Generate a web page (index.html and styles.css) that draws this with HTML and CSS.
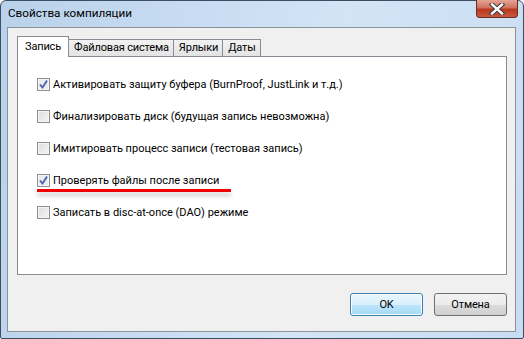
FILE: index.html
```html
<!DOCTYPE html>
<html>
  <head>
    <meta charset="UTF-8" />
    <title>Свойства компиляции</title>
    <link rel="stylesheet" href="styles.css">
  </head>
  <body>
    <div class="window">
      <div class="titlebar">
        <span class="title">Свойства компиляции</span>
        <div class="close">
          <svg width="16" height="12" viewBox="0 0 16 12">
            <path d="M3 1.5 L13 10.5 M13 1.5 L3 10.5" stroke="#3a3a3a" stroke-width="4.4" stroke-linecap="square"/>
            <path d="M3 1.5 L13 10.5 M13 1.5 L3 10.5" stroke="#fff" stroke-width="2.4" stroke-linecap="square"/>
          </svg>
        </div>
      </div>
      <div class="client">
        <div class="tabs">
          <div class="tab active">Запись</div>
          <div class="tab">Файловая система</div>
          <div class="tab">Ярлыки</div>
          <div class="tab">Даты</div>
        </div>
        <div class="panel">
          <label class="row"><span class="box checked"></span>Активировать защиту буфера (BurnProof, JustLink и т.д.)</label>
          <label class="row"><span class="box"></span>Финализировать диск (будущая запись невозможна)</label>
          <label class="row"><span class="box"></span>Имитировать процесс записи (тестовая запись)</label>
          <label class="row"><span class="box checked"></span>Проверять файлы после записи<span class="mark"></span></label>
          <label class="row"><span class="box"></span>Записать в disc-at-once (DAO) режиме</label>
        </div>
        <div class="buttons">
          <div class="btn default">OK</div>
          <div class="btn">Отмена</div>
        </div>
      </div>
    </div>
  </body>
</html>
```
FILE: styles.css
```css
* {
  box-sizing: border-box;
}
body {
  margin: 0;
  background: #fff;
  font-family: Roboto, "Liberation Sans", sans-serif;
  font-size: 11px;
  letter-spacing: -0.15px;
  color: #000;
}
.window {
  width: 524px;
  height: 339px;
  border: 1px solid #3d4e63;
  border-radius: 6px 6px 2px 2px;
  background: linear-gradient(100deg, #b9d1ea 0%, #c6dbf1 30%, #d3e4f6 60%, #c9ddf2 100%);
  display: flex;
  flex-direction: column;
}
.titlebar {
  height: 26px;
  display: flex;
  align-items: flex-start;
  justify-content: space-between;
  padding-left: 7px;
}
.title {
  margin-top: 5px;
  font-size: 11.7px;
  letter-spacing: 0;
  color: #000;
}
.close {
  width: 42px;
  height: 18px;
  margin-right: 5px;
  margin-top: -1px;
  border: 1px solid #6d2b22;
  border-top: none;
  border-radius: 0 0 4px 4px;
  background: linear-gradient(#e4a596 0%, #d0725f 45%, #b8371f 55%, #c75a3f 100%);
  display: flex;
  align-items: center;
  justify-content: center;
}
.client {
  flex: 1;
  margin: 0 7px 6px 6px;
  background: #f0f0f0;
  border: 1px solid #8a929c;
  padding: 8px 8px 0 9px;
  display: flex;
  flex-direction: column;
}
.tabs {
  display: flex;
  align-items: flex-end;
  height: 20px;
  position: relative;
  z-index: 1;
}
.tab {
  height: 17px;
  padding: 0 4px 0 5px;
  border: 1px solid #898c95;
  border-bottom: none;
  border-left: none;
  background: linear-gradient(#f2f2f2, #e3e3e3);
  line-height: 16px;
}
.tab.active {
  height: 21px;
  border-left: 1px solid #898c95;
  background: #fff;
  padding: 0 7px;
  line-height: 19px;
  margin-bottom: -1px;
}
.panel {
  height: 219px;
  background: #fff;
  border: 1px solid #898c95;
  padding: 20px 0 0 19px;
  display: flex;
  flex-direction: column;
  gap: 17px;
}
.row {
  display: flex;
  align-items: center;
  height: 15px;
  gap: 3px;
  position: relative;
  letter-spacing: 0;
}
.box {
  width: 13px;
  height: 13px;
  border: 1px solid #8e8f8f;
  background: linear-gradient(135deg, #dcdcdc, #f6f6f6);
  box-shadow: inset 0 0 0 1px #f4f4f4;
}
.box.checked {
  background: #e8ecf2 url("data:image/svg+xml;utf8,<svg xmlns='http://www.w3.org/2000/svg' width='11' height='11'><path d='M2 5.5 L4.5 8.5 L9 1.5' fill='none' stroke='%234c61a5' stroke-width='1.8'/></svg>") no-repeat center;
}
.mark {
  position: absolute;
  left: 0;
  top: 16px;
  width: 194px;
  height: 3px;
  background: #f20000;
  box-shadow: 0 4px 4px rgba(0, 0, 0, 0.22);
}
.buttons {
  display: flex;
  justify-content: flex-end;
  gap: 11px;
  padding-top: 18px;
}
.btn {
  width: 73px;
  height: 23px;
  border: 1px solid #707070;
  border-radius: 3px;
  background: linear-gradient(#f2f2f2 0%, #ebebeb 50%, #dddddd 51%, #cfcfcf 100%);
  text-align: center;
  line-height: 21px;
}
.btn.default {
  border-color: #3c7fb1;
  background: linear-gradient(#eaf6fd 0%, #d9f0fc 50%, #bee6fd 51%, #a7d9f5 100%);
  box-shadow: inset 0 0 0 1px #fff;
}
```
